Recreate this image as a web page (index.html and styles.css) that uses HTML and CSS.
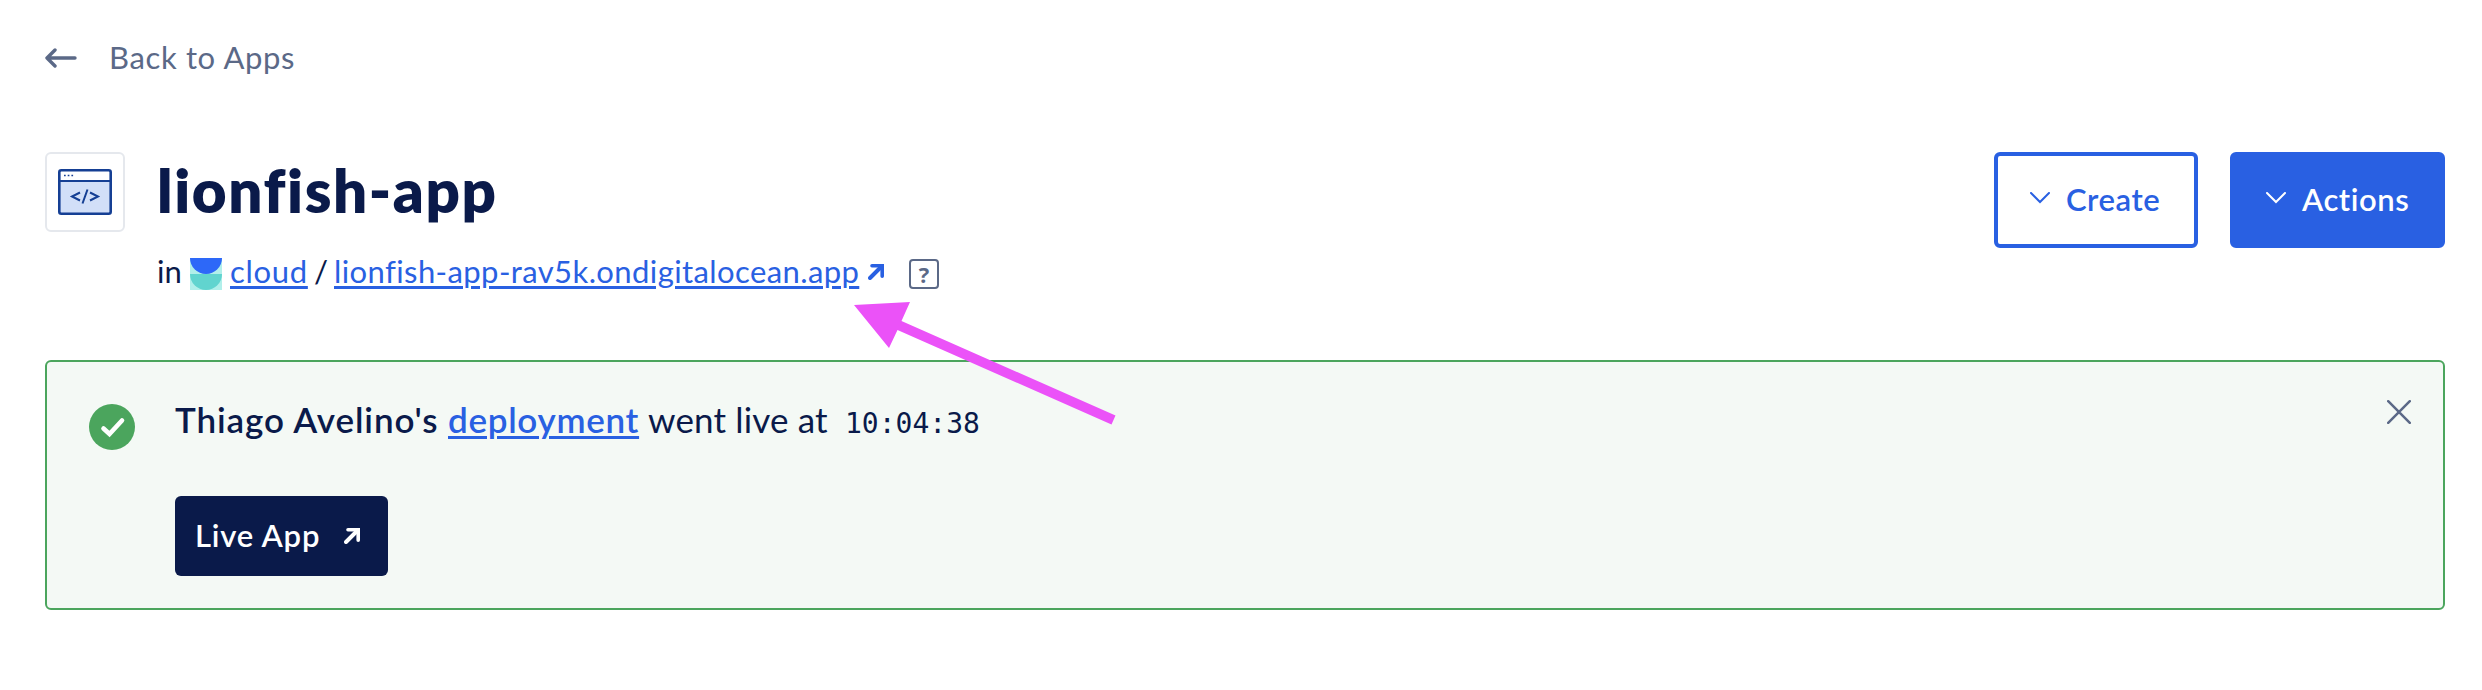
FILE: index.html
```html
<!DOCTYPE html>
<html lang="en">
<head>
<meta charset="utf-8">
<title>lionfish-app</title>
<link rel="stylesheet" href="styles.css">
</head>
<body>
<main class="page">
  <a class="back" href="#">
    <svg class="back-icon" width="32" height="20" viewBox="0 0 32 20"><path d="M30 10H2M10 2L2 10l8 8" fill="none" stroke="currentColor" stroke-width="3.4" stroke-linecap="round" stroke-linejoin="round"/></svg>
    <span>Back to Apps</span>
  </a>
  <header class="header">
    <div class="app-icon">
      <svg width="54" height="46" viewBox="0 0 54 46"><rect x="1.3" y="1.3" width="51.4" height="43.4" rx="2" fill="#fff"/><path d="M2 12h50v32H2z" fill="#d2dff8"/><rect x="1.3" y="1.3" width="51.4" height="43.4" rx="2" fill="none" stroke="#153f94" stroke-width="2.6"/><path d="M1 12h52M22 23.500l-8 4 8 4M32 23.500l8 4-8 4M29.500 20.500l-5 14" fill="none" stroke="#153f94" stroke-width="2"/><path d="M6 6.500h1.700M9.700 6.500h1.700M13.400 6.500h1.700" stroke="#153f94" stroke-width="1.700"/></svg>
    </div>
    <div class="heading">
      <h1>lionfish-app</h1>
      <div class="sub">
        <span class="in">in</span>
        <svg class="team" width="32" height="32" viewBox="0 0 32 32"><path d="M0 0h32v32H0z" fill="#b1efea"/><path d="M0 0h32a16 16 0 0 1-32 0z" fill="#2d68f8"/><path d="M0 16h32a16 16 0 0 1-32 0z" fill="#61d4cf"/></svg>
        <a class="cloud" href="#">cloud</a>
        <span class="slash">/</span>
        <a class="url" href="#">lionfish-app-rav5k.ondigitalocean.app</a>
        <svg class="ext" width="16" height="16" viewBox="0 0 16 16"><path d="M2 14L12 4" stroke="currentColor" stroke-width="4" stroke-linecap="round"/><path d="M4 0h12v12.200a1.800 1.800 0 0 1-3.600 0V3.600H4a1.800 1.800 0 0 1 0-3.600z" fill="currentColor"/></svg>
        <span class="help">?</span>
      </div>
    </div>
    <div class="buttons">
      <button class="btn create"><svg width="20" height="12" viewBox="0 0 20 12"><path d="M1 1l9 9 9-9" fill="none" stroke="currentColor" stroke-width="2" stroke-linecap="round"/></svg><span>Create</span></button>
      <button class="btn actions"><svg width="20" height="12" viewBox="0 0 20 12"><path d="M1 1l9 9 9-9" fill="none" stroke="currentColor" stroke-width="2" stroke-linecap="round"/></svg><span>Actions</span></button>
    </div>
  </header>
  <section class="alert">
    <svg class="check" width="46" height="46" viewBox="0 0 46 46"><circle cx="23" cy="23" r="23" fill="#4ba55d"/><path d="M14.500 24.500l6 5.500 12.500-13.500" fill="none" stroke="#fff" stroke-width="4.600" stroke-linecap="round"/></svg>
    <div class="alert-body">
      <div class="message">
        <strong class="who">Thiago Avelino's</strong>
        <a class="deployment" href="#">deployment</a>
        <span class="went">went live at</span>
        <time>10:04:38</time>
      </div>
      <button class="live"><span>Live App</span><svg width="16" height="16" viewBox="0 0 16 16"><path d="M2 14L12 4" stroke="currentColor" stroke-width="4" stroke-linecap="round"/><path d="M4 0h12v12.200a1.800 1.800 0 0 1-3.600 0V3.600H4a1.800 1.800 0 0 1 0-3.600z" fill="currentColor"/></svg></button>
    </div>
    <svg class="close" width="24" height="24" viewBox="0 0 24 24"><path d="M1.200 1.200l21.600 21.600M22.800 1.200L1.200 22.800" stroke="#5b6987" stroke-width="2.500" stroke-linecap="round"/></svg>
  </section>
  <svg class="pointer" width="262" height="123" viewBox="0 0 262 123"><path d="M0 3L56 0 47.500 19 261.500 113.500 257.500 122.500 43.500 28 35 46z" fill="#eb52f8"/></svg>
</main>
</body>
</html>
```
FILE: styles.css
```css
* { box-sizing: border-box; }
body { margin: 0; background: #fff; color: #0a1a4a; font: 31px/40px Lato, "Liberation Sans", sans-serif; }
button { font: inherit; cursor: pointer; }
svg { display: block; flex: none; }
.page { position: relative; height: 690px; padding: 37px 37px 0 45px; }
.back { display: flex; align-items: center; height: 40px; color: #5b6987; text-decoration: none; }
.back-icon { margin-right: 32px; margin-top: 1px; }
.back span { letter-spacing: 0.65px; margin-top: -1px; }
.header { display: flex; align-items: flex-start; height: 208px; margin-top: 75px; }
.app-icon { display: flex; align-items: center; justify-content: center; width: 80px; height: 80px; border: 2px solid #e5e8ed; border-radius: 6px; }
.heading { margin-left: 32px; flex: 1; }
h1 { margin: -2px 0 0; font-size: 60px; line-height: 80px; font-weight: 800; letter-spacing: 1.6px; white-space: nowrap; }
.sub { display: flex; align-items: center; height: 40px; margin-top: 24px; white-space: nowrap; }
.sub .in, .sub .slash, .sub a { margin-top: -7px; }
.sub a, .message a { color: #2960e2; text-decoration: underline; text-decoration-thickness: 3px; text-underline-offset: 3px; }
.in { width: 33px; }
.sub .cloud { width: 77px; margin-left: 8px; letter-spacing: 0.7px; }
.slash { width: 27px; padding-left: 7px; }
.url { width: 526px; letter-spacing: 0.4px; }
.ext { margin-left: 8px; color: #2960e2; transform: translateY(-2px); }
.help { width: 30px; height: 30px; margin-left: 25px; border: 2px solid #5b6987; border-radius: 4px; color: #5b6987; font: 700 22px/26px "Open Sans", sans-serif; text-align: center; }
.buttons { display: flex; gap: 32px; }
.btn { display: flex; align-items: center; height: 96px; border: 4px solid #2960e2; border-radius: 6px; font-weight: 600; padding: 0 0 0 32px; white-space: nowrap; letter-spacing: 0.55px; }
.btn svg { margin-top: -4px; margin-right: 16px; }
.btn span { margin-top: -3px; }
.create { width: 204px; background: #fff; color: #2960e2; }
.actions { width: 215px; background: #2960e2; color: #fff; }
.alert { display: flex; align-items: flex-start; height: 250px; padding: 0 32px 0 42px; border: 2px solid #4ba55d; border-radius: 6px; background: #f4f9f5; }
.check { margin-top: 42px; }
.alert-body { flex: 1; margin-left: 40px; padding-top: 35px; }
.message { display: flex; align-items: baseline; height: 44px; font-size: 35px; line-height: 44px; white-space: nowrap; }
.who { width: 273px; font-weight: 600; letter-spacing: 0.9px; }
.message .deployment { width: 192px; font-weight: 600; letter-spacing: 0.7px; }
.went { width: 205px; padding-left: 8px; letter-spacing: 0.15px; }
time { font: 28px/44px "DejaVu Sans Mono", monospace; }
.live { display: flex; align-items: center; width: 213px; height: 80px; margin-top: 55px; padding: 0 0 0 20px; border: 0; border-radius: 6px; background: #0a1a4a; color: #fff; font-weight: 600; letter-spacing: 0.8px; }
.live span { width: 149px; margin-top: -3px; text-align: left; }
.close { margin-top: 38px; }
.pointer { position: absolute; left: 854px; top: 302px; }
```
